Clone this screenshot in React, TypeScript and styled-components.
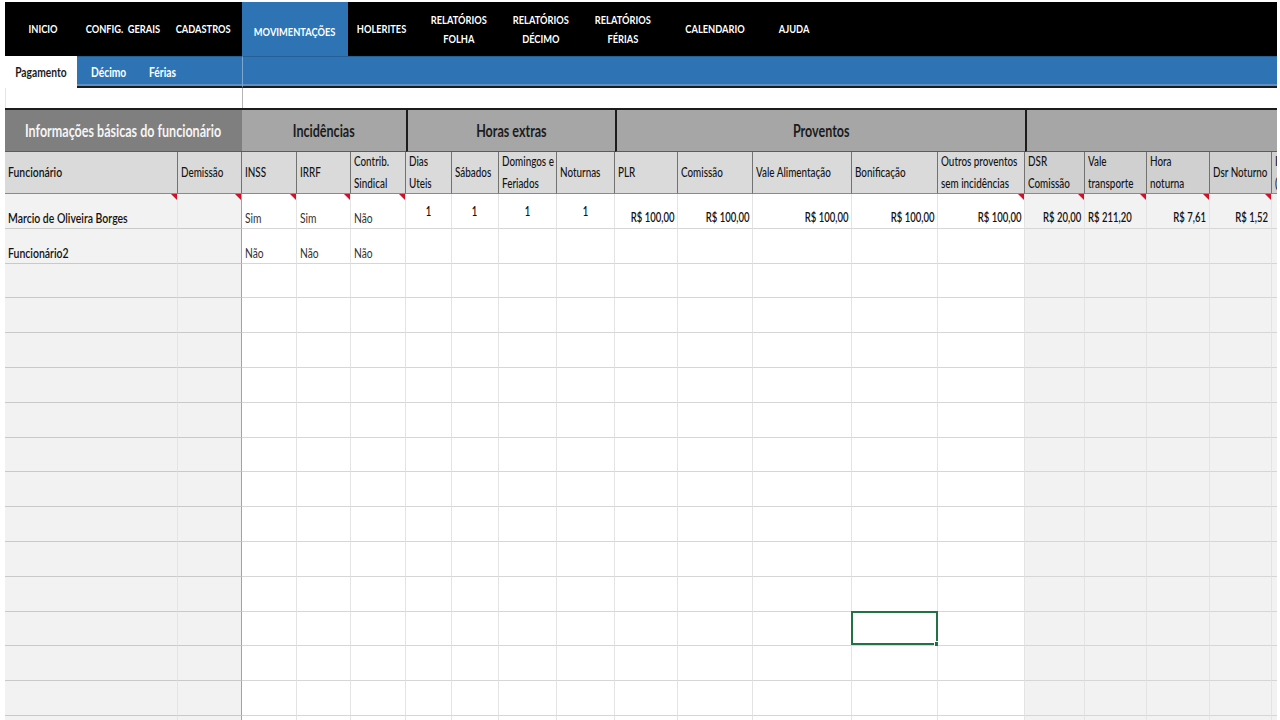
import React from 'react';
import styled, { createGlobalStyle, css } from 'styled-components';

const FONT = `Lato, "Noto Sans", "DejaVu Sans", sans-serif`;
const BLUE = '#2e74b5';
const SQUEEZE = 0.76;

const GlobalStyle = createGlobalStyle`
  * { box-sizing: border-box; }
  html, body { margin: 0; padding: 0; background: #fff; }
  body { font-family: ${FONT}; color: #111; }
`;

type Zone = 'info' | 'main' | 'calc';
type Align = 'left' | 'right' | 'center';

interface Col {
  w: number;
  label: string;
  zone: Zone;
  big?: boolean;
  align: Align;
  mid?: boolean;
}

const cols: Col[] = [
  { w: 173, label: 'Funcionário', zone: 'info', big: true, align: 'left' },
  { w: 64, label: 'Demissão', zone: 'info', align: 'left' },
  { w: 55, label: 'INSS', zone: 'main', align: 'left' },
  { w: 54, label: 'IRRF', zone: 'main', align: 'left' },
  { w: 55, label: 'Contrib.\nSindical', zone: 'main', align: 'left' },
  { w: 46, label: 'Dias\nUteis', zone: 'main', align: 'center', mid: true },
  { w: 47, label: 'Sábados', zone: 'main', align: 'center', mid: true },
  { w: 58, label: 'Domingos e\nFeriados', zone: 'main', align: 'center', mid: true },
  { w: 58, label: 'Noturnas', zone: 'main', align: 'center', mid: true },
  { w: 63, label: 'PLR', zone: 'main', align: 'right' },
  { w: 75, label: 'Comissão', zone: 'main', align: 'right' },
  { w: 99, label: 'Vale Alimentação', zone: 'main', align: 'right' },
  { w: 86, label: 'Bonificação', zone: 'main', align: 'right' },
  { w: 87, label: 'Outros proventos\nsem incidências', zone: 'main', align: 'right' },
  { w: 60, label: 'DSR\nComissão', zone: 'calc', align: 'right' },
  { w: 62, label: 'Vale\ntransporte', zone: 'calc', align: 'left' },
  { w: 63, label: 'Hora\nnoturna', zone: 'calc', align: 'right' },
  { w: 62, label: 'Dsr Noturno', zone: 'calc', align: 'right' },
  { w: 60, label: 'Insalubridade\n(%)', zone: 'calc', align: 'right' },
];

const groups = [
  { label: 'Informações básicas do funcionário', span: 2, dark: true, divider: false },
  { label: 'Incidências', span: 3, dark: false, divider: false },
  { label: 'Horas extras', span: 4, dark: false, divider: true },
  { label: 'Proventos', span: 5, dark: false, divider: true },
  { label: '', span: 5, dark: false, divider: true },
];

const navItems = [
  { label: 'INICIO', w: 76 },
  { label: 'CONFIG.  GERAIS', w: 83 },
  { label: 'CADASTROS', w: 78 },
  { label: 'MOVIMENTAÇÕES', w: 106, active: true },
  { label: 'HOLERITES', w: 67 },
  { label: 'RELATÓRIOS\nFOLHA', w: 88 },
  { label: 'RELATÓRIOS\nDÉCIMO', w: 76 },
  { label: 'RELATÓRIOS\nFÉRIAS', w: 88 },
  { label: 'CALENDARIO', w: 97 },
  { label: 'AJUDA', w: 61 },
];

const money = 'R$ 100,00';
const rows: string[][] = [
  ['Marcio de Oliveira Borges', '', 'Sim', 'Sim', 'Não', '1', '1', '1', '1', money, money, money, money, money, 'R$ 20,00', 'R$ 211,20', 'R$ 7,61', 'R$ 1,52', ''],
  ['Funcionário2', '', 'Não', 'Não', 'Não'],
];
const ROW_COUNT = 16;
const commentCols = [0, 1, 2, 3, 4, 13, 14, 15, 16, 17];
const selected = { row: 12, col: 12 };

const Squeeze = styled.span<{ $origin?: Align }>`
  display: inline-block;
  flex-shrink: 0;
  white-space: pre;
  text-align: inherit;
  transform: scaleX(${SQUEEZE});
  transform-origin: ${p => p.$origin ?? 'left'} center;
`;

/* ---------- ribbon ---------- */

const Screen = styled.div`
  width: 1280px;
  height: 720px;
  overflow: hidden;
  padding: 2px 3px 0 5px;
  display: flex;
  flex-direction: column;
`;

const TopBar = styled.nav`
  display: flex;
  height: 54px;
  flex-shrink: 0;
  background: #000;
`;

const NavItem = styled.div<{ $w: number; $active?: boolean }>`
  width: ${p => p.$w}px;
  flex-shrink: 0;
  display: flex;
  align-items: center;
  justify-content: center;
  text-align: center;
  color: #fff;
  font-size: 12.2px;
  font-weight: 700;
  line-height: 19px;
  padding-bottom: 1px;
  ${p =>
    p.$active &&
    css`
      background: ${BLUE};
      padding: 4px 0 0;
    `}
`;

const SubBar = styled.div`
  display: flex;
  height: 32px;
  flex-shrink: 0;
`;

const ActiveSubTab = styled.div`
  width: 72px;
  flex-shrink: 0;
  display: flex;
  align-items: center;
  justify-content: center;
  background: #fff;
  color: #1a1a1a;
  font-size: 13.5px;
  font-weight: 700;
  padding: 0 0 1px 0;
`;

const SubTabGroup = styled.div<{ $fill?: boolean }>`
  display: flex;
  align-items: center;
  background: ${BLUE};
  border-top: 1px solid #245f96;
  border-bottom: 2px solid #1b1b1b;
  box-shadow: inset 0 -2px 0 #5f8fc0;
  ${p =>
    p.$fill
      ? css`
          flex: 1;
          border-left: 1px solid #7fa6cf;
        `
      : css`
          width: 165px;
          flex-shrink: 0;
          padding-left: 14px;
          gap: 24px;
        `}
`;

const SubTab = styled.div`
  color: #fff;
  font-size: 13.5px;
  font-weight: 700;
  width: 34px;
`;

const FreezeGap = styled.div`
  height: 20px;
  flex-shrink: 0;
  display: grid;
  grid-template-columns: 237px 1fr;
`;

const GapPart = styled.div<{ $frozen?: boolean }>`
  border-left: 1px solid ${p => (p.$frozen ? '#b4b4b4' : '#e4e4e4')};
`;

/* ---------- sheet ---------- */

const Sheet = styled.div`
  width: 1272px;
  flex: 1;
  overflow: hidden;
  display: grid;
  grid-template-columns: ${cols.map(c => `${c.w}px`).join(' ')};
  grid-template-rows: 44px 42px repeat(${ROW_COUNT}, 34.8px);
`;

const GroupCell = styled.div<{ $span: number; $dark: boolean; $divider: boolean }>`
  grid-column: span ${p => p.$span};
  display: flex;
  align-items: center;
  justify-content: center;
  background: ${p => (p.$dark ? '#7f7f7f' : '#a6a6a6')};
  color: ${p => (p.$dark ? '#f4f4f4' : '#1c1c1c')};
  border-top: 2px solid #1c1c1c;
  border-bottom: 1px solid #5c5c5c;
  border-left: ${p => (p.$divider ? '2px solid #1c1c1c' : '0')};
  font-size: 16.5px;
  font-weight: 700;
  overflow: hidden;
`;

const HeadCell = styled.div<{ $zone: Zone; $big?: boolean }>`
  display: flex;
  align-items: center;
  padding: 0 2px 2px 3px;
  background: ${p => (p.$zone === 'calc' ? '#d0d0d0' : '#dadada')};
  border-right: 1px solid #727272;
  border-bottom: 1px solid #8a8a8a;
  color: #141414;
  font-size: ${p => (p.$big ? 13.7 : 13)}px;
  font-weight: ${p => (p.$big ? 600 : 500)};
  line-height: 22px;
  overflow: hidden;
`;

const zoneBg: Record<Zone, string> = { info: '#f2f2f2', main: '#ffffff', calc: '#f2f2f2' };
const zoneH: Record<Zone, string> = { info: '#c9c9c9', main: '#d6d6d6', calc: '#d6d6d6' };

const Cell = styled.div<{ $zone: Zone; $align: Align; $mid?: boolean; $frozen?: boolean; $weak?: boolean }>`
  position: relative;
  display: flex;
  align-items: ${p => (p.$mid ? 'center' : 'flex-end')};
  justify-content: ${p => (p.$align === 'left' ? 'flex-start' : p.$align === 'right' ? 'flex-end' : 'center')};
  padding: ${p => (p.$mid ? '3px 3px 0' : '0 3px 1px')};
  background: ${p => zoneBg[p.$zone]};
  border-right: 1px solid ${p => (p.$frozen ? '#a2a2a2' : '#e4e4e4')};
  border-bottom: 1px solid ${p => zoneH[p.$zone]};
  color: ${p => (p.$weak ? '#333' : '#111')};
  font-size: ${p => (p.$zone === 'info' ? 13.8 : p.$weak ? 13.5 : 12.5)}px;
  font-weight: ${p => (p.$weak ? 400 : 600)};
  line-height: 18px;
`;

const CommentMark = styled.span`
  position: absolute;
  top: 0;
  right: 0;
  width: 6px;
  height: 6px;
  background: #d01028;
  clip-path: polygon(0 0, 100% 0, 100% 100%);
`;

const Selection = styled.span`
  position: absolute;
  top: -1px;
  left: -1px;
  right: -1px;
  bottom: 0;
  border: 2px solid #217346;
  pointer-events: none;
`;

const FillHandle = styled.span`
  position: absolute;
  right: -4px;
  bottom: -4px;
  width: 6px;
  height: 6px;
  background: #217346;
  border: 1px solid #fff;
`;

export default function App() {
  return (
    <>
      <GlobalStyle />
      <Screen>
        <TopBar>
          {navItems.map(n => (
            <NavItem key={n.label} $w={n.w} $active={n.active}>
              <Squeeze $origin="center">{n.label}</Squeeze>
            </NavItem>
          ))}
        </TopBar>
        <SubBar>
          <ActiveSubTab>
            <Squeeze $origin="center">Pagamento</Squeeze>
          </ActiveSubTab>
          <SubTabGroup>
            <SubTab>
              <Squeeze>Décimo</Squeeze>
            </SubTab>
            <SubTab>
              <Squeeze>Férias</Squeeze>
            </SubTab>
          </SubTabGroup>
          <SubTabGroup $fill />
        </SubBar>
        <FreezeGap>
          <GapPart />
          <GapPart $frozen />
        </FreezeGap>
        <Sheet>
          {groups.map((g, i) => (
            <GroupCell key={i} $span={g.span} $dark={g.dark} $divider={g.divider}>
              <Squeeze $origin="center">{g.label}</Squeeze>
            </GroupCell>
          ))}
          {cols.map((c, i) => (
            <HeadCell key={i} $zone={c.zone} $big={c.big}>
              <Squeeze>{c.label}</Squeeze>
            </HeadCell>
          ))}
          {Array.from({ length: ROW_COUNT }).map((_, r) =>
            cols.map((c, ci) => {
              const v = rows[r]?.[ci] ?? '';
              const weak = ci >= 2 && ci <= 4;
              return (
                <Cell
                  key={`${r}-${ci}`}
                  $zone={c.zone}
                  $align={c.align}
                  $mid={c.mid}
                  $frozen={ci === 1}
                  $weak={weak}
                >
                  {v && <Squeeze $origin={c.align}>{v}</Squeeze>}
                  {r === 0 && commentCols.includes(ci) && <CommentMark />}
                  {r === selected.row && ci === selected.col && (
                    <Selection>
                      <FillHandle />
                    </Selection>
                  )}
                </Cell>
              );
            })
          )}
        </Sheet>
      </Screen>
    </>
  );
}
